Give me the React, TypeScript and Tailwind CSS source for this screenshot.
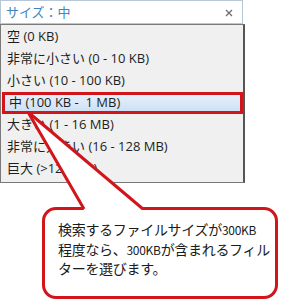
import React from "react";

const rows = [
  "空 (0 KB)",
  "非常に小さい (0 - 10 KB)",
  "小さい (10 - 100 KB)",
  "中 (100 KB -  1 MB)",
  "大きい (1 - 16 MB)",
  "非常に大きい (16 - 128 MB)",
  "巨大 (>128 MB)",
];

export default function App() {
  return (
    <div
      className="relative w-[284px] h-[300px] overflow-hidden bg-white text-[#1e1e1e]"
      style={{ fontFamily: '"Open Sans", "Noto Sans CJK JP", sans-serif' }}
    >
      {/* search box */}
      <div className="flex items-center justify-between w-[243px] h-[24px] border border-[#b8c6d6] pl-[5px] pr-[9px] bg-white">
        <span className="text-[13px] leading-none text-[#3d86c2]">サイズ：中</span>
        <svg width="8" height="8" viewBox="0 0 8 8" className="mt-[1px]">
          <path d="M1 1L7 7M7 1L1 7" stroke="#6a6a6a" strokeWidth="1.2" />
        </svg>
      </div>
      {/* dropdown */}
      <div className="w-[245px] border-t border-l border-b border-[#7a7a7a] border-r-2 border-r-[#555] bg-[#f0f0f0] pt-[1px] pb-[2px]">
        {rows.map((r, i) =>
          i === 3 ? (
            <div
              key={i}
              className="h-[22px] ml-[1px] border-[3px] border-[#d2141b] flex items-center pl-[4px] bg-gradient-to-b from-[#e6f0fb] to-[#cfe0f4] text-[13px] whitespace-pre"
            >
              {r}
            </div>
          ) : (
            <div key={i} className="h-[22px] flex items-center pl-[6px] text-[13px] whitespace-pre">
              {r}
            </div>
          )
        )}
      </div>
      {/* callout */}
      <div
        className="mt-[24px] ml-[42px] w-[236px] h-[92px] border-[3px] border-[#d2141b] rounded-[14px] bg-white pl-[13px] pt-[10px] text-[14px] leading-[18.5px] text-[#1a1a1a] whitespace-nowrap tracking-[-0.3px]"
        style={{ fontFamily: '"Noto Sans CJK JP", sans-serif' }}
      >
        <div>検索するファイルサイズが<span className="text-[12px]">300KB</span></div>
        <div>程度なら、<span className="text-[12px]">300KB</span>が含まれるフィル</div>
        <div>ターを選びます。</div>
      </div>
      {/* tail */}
      <svg className="absolute left-0 top-0" width="284" height="300" viewBox="0 0 284 300">
        <polygon points="28,112 83,208 85,212 141,212 143,208" fill="#ffffff" />
        <path d="M28 112L84 209" stroke="#d2141b" strokeWidth="3" fill="none" />
        <path d="M28 112L143 209" stroke="#d2141b" strokeWidth="3" fill="none" />
      </svg>
    </div>
  );
}
